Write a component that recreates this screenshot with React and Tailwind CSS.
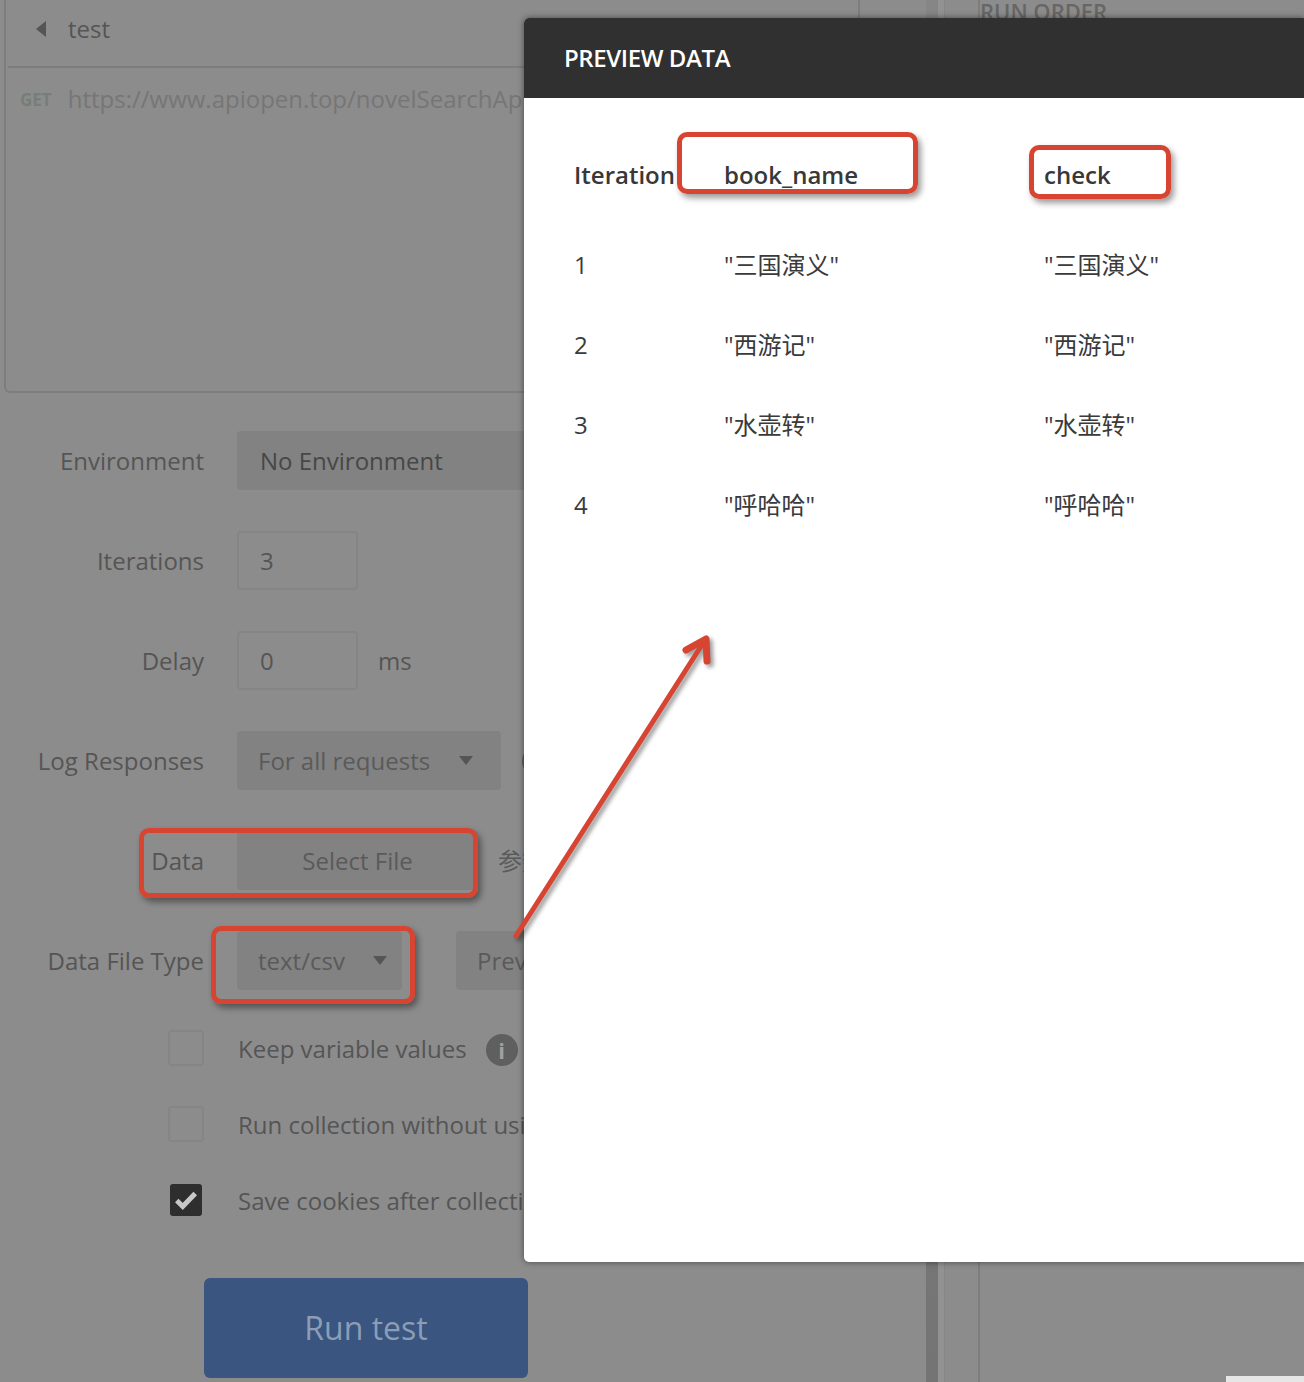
const FONT = "font-['Open_Sans','Noto_Sans_CJK_SC',sans-serif]";

function Row({ label, children }) {
  return (
    <div className="flex items-center h-[59px] mb-[41px]">
      <div className="w-[204px] text-right text-[24px] leading-none text-[#555555] whitespace-nowrap">{label}</div>
      <div className="ml-[33px] flex items-center min-w-0">{children}</div>
    </div>
  );
}

function Caret() {
  return <span className="ml-auto w-0 h-0 border-x-[7px] border-x-transparent border-t-[9px] border-t-[#555555]" />;
}

function Check({ checked, label, children }) {
  return (
    <div className="flex items-center h-[34px] mb-[42px]">
      <div className="w-[204px] flex justify-end">
        {checked ? (
          <div className="w-[32px] h-[32px] mr-[2px] rounded-[3px] bg-[#2e2e2e] flex items-center justify-center">
            <svg width="26" height="26" viewBox="0 0 24 24" fill="none" stroke="#c8c8c8" strokeWidth="4.6">
              <path d="M3.5 12.5l5.5 5.5L20.5 6" />
            </svg>
          </div>
        ) : (
          <div className="w-[36px] h-[36px] rounded-[4px] border-2 border-[#858585]" />
        )}
      </div>
      <div className="ml-[34px] pt-[2px] text-[24px] leading-none text-[#555555] whitespace-nowrap">{label}</div>
      {children}
    </div>
  );
}

function Box({ className }) {
  return <div className={"absolute rounded-[10px] border-[5px] border-[#d84432] shadow-[3px_4px_6px_rgba(0,0,0,0.4)] " + className} />;
}

const rows = [
  ["1", "\"三国演义\""],
  ["2", "\"西游记\""],
  ["3", "\"水壶转\""],
  ["4", "\"呼哈哈\""],
];

export default function App() {
  return (
    <div className={"relative w-[1304px] h-[1382px] overflow-hidden bg-[#8c8c8c] flex " + FONT}>
      <div className="w-[858px] h-full shrink-0">
        <div className="w-[860px] ml-[4px] h-[393px] border-l-2 border-b-2 border-[#7d7d7d] rounded-bl-md">
          <div className="h-[68px] ml-[2px] border-b-2 border-[#7d7d7d] flex items-center pl-[28px] pb-[8px]">
            <span className="w-0 h-0 border-y-[8px] border-y-transparent border-r-[10px] border-r-[#555555]" />
            <span className="ml-[22px] text-[24px] leading-none text-[#555555]">test</span>
          </div>
          <div className="flex items-center h-[60px] pl-[14px] pt-[2px]">
            <span className="text-[17px] font-bold text-[#767e78] leading-none">GET</span>
            <span className="ml-[16px] text-[24px] leading-none text-[#767676] whitespace-nowrap">https://www.apiopen.top/novelSearchApi</span>
          </div>
        </div>

        <div className="pt-[38px]">
          <Row label="Environment">
            <div className="w-[330px] h-[59px] rounded-[4px] bg-[#828282] flex items-center pl-[23px] text-[24px] text-[#474747]">No Environment</div>
          </Row>
          <Row label="Iterations">
            <div className="w-[121px] h-[59px] rounded-[4px] border-2 border-[#858585] flex items-center pl-[21px] text-[24px] text-[#555555]">3</div>
          </Row>
          <Row label="Delay">
            <div className="w-[121px] h-[59px] rounded-[4px] border-2 border-[#858585] flex items-center pl-[21px] text-[24px] text-[#555555]">0</div>
            <span className="ml-[20px] text-[24px] text-[#555555]">ms</span>
          </Row>
          <Row label="Log Responses">
            <div className="w-[264px] h-[59px] rounded-[4px] bg-[#828282] flex items-center pl-[21px] pr-[28px] text-[24px] text-[#5a5a5a]">
              For all requests
              <Caret />
            </div>
            <span className="ml-[21px] w-[32px] h-[32px] rounded-full bg-[#5f5f5f] shrink-0" />
          </Row>
          <Row label="Data">
            <div className="w-[241px] h-[59px] rounded-[4px] bg-[#828282] flex items-center justify-center text-[24px] text-[#5a5a5a]">Select File</div>
            <span className="ml-[20px] text-[24px] text-[#5a5a5a] whitespace-nowrap">参数</span>
          </Row>
          <Row label="Data File Type">
            <div className="w-[165px] h-[59px] rounded-[4px] bg-[#828282] flex items-center pl-[21px] pr-[15px] text-[24px] text-[#5a5a5a]">
              text/csv
              <Caret />
            </div>
            <div className="ml-[54px] w-[140px] h-[59px] rounded-[4px] bg-[#828282] flex items-center pl-[21px] text-[24px] text-[#5a5a5a]">Preview</div>
          </Row>
          <Check label="Keep variable values">
            <span className="ml-[19px] mt-[4px] w-[32px] h-[32px] rounded-full bg-[#5f5f5f] flex items-center justify-center text-[22px] leading-none font-bold text-[#a0a0a0] shrink-0">i</span>
          </Check>
          <Check label="Run collection without using stored cookies" />
          <Check checked label="Save cookies after collection run" />
          <div className="ml-[204px] mt-[61px] w-[324px] h-[100px] rounded-[6px] bg-[#3a5580] flex items-center justify-center text-[32px] text-[#8c9db6]">Run test</div>
        </div>
      </div>

      <div className="w-[2px] h-[40px] bg-[#7d7d7d] shrink-0" />
      <div className="w-[66px] shrink-0" />
      <div className="w-[12px] h-full shrink-0 bg-[linear-gradient(to_bottom,#868686,#747474)]" />
      <div className="w-[6px] h-full shrink-0 bg-[#929292]" />
      <div className="w-[1px] h-full shrink-0 bg-[#858585]" />
      <div className="w-[35px] shrink-0 h-full border-r-2 border-[#7d7d7d]" />
      <div className="flex-1 relative">
        <div className="text-[22px] leading-none font-semibold text-[#666666] whitespace-nowrap">RUN ORDER</div>
        <div className="absolute left-[246px] bottom-0 w-[100px] h-[6px] bg-[#e6e6e6]" />
      </div>

      {/* modal */}
      <div className="absolute left-[524px] top-[18px] w-[780px] h-[1244px] bg-white rounded-l-[5px] shadow-[0_0_6px_rgba(0,0,0,0.5)]">
        <div className="h-[80px] bg-[#303030] rounded-tl-[5px] flex items-center pl-[40px] text-[24px] font-semibold tracking-[-0.4px] text-white">PREVIEW DATA</div>
        <div className="pl-[50px] pt-[37px] text-[#3a3a3a]">
          <div className="grid grid-cols-[150px_320px_1fr] h-[80px] mb-[10px] items-center text-[24px] font-semibold text-[#383838]">
            <span>Iteration</span>
            <span>book_name</span>
            <span>check</span>
          </div>
          {rows.map(([n, v]) => (
            <div key={n} className="grid grid-cols-[150px_320px_1fr] h-[80px] items-center text-[24px]">
              <span>{n}</span>
              <span>{v}</span>
              <span>{v}</span>
            </div>
          ))}
        </div>
      </div>

      {/* annotations */}
      <Box className="left-[139px] top-[828px] w-[339px] h-[70px]" />
      <Box className="left-[211px] top-[926px] w-[204px] h-[78px]" />
      <Box className="left-[677px] top-[132px] w-[241px] h-[62px]" />
      <Box className="left-[1029px] top-[145px] w-[142px] h-[54px]" />
      <svg className="absolute left-[500px] top-[620px] drop-shadow-[3px_3px_2px_rgba(0,0,0,0.4)]" width="240" height="340" viewBox="0 0 240 340" fill="none" stroke="#d84432" strokeWidth="5" strokeLinecap="round" strokeLinejoin="round">
        <path d="M16 316L205 20" />
        <path d="M186 30L206 19L207 41" strokeWidth="7" />
      </svg>
    </div>
  );
}
